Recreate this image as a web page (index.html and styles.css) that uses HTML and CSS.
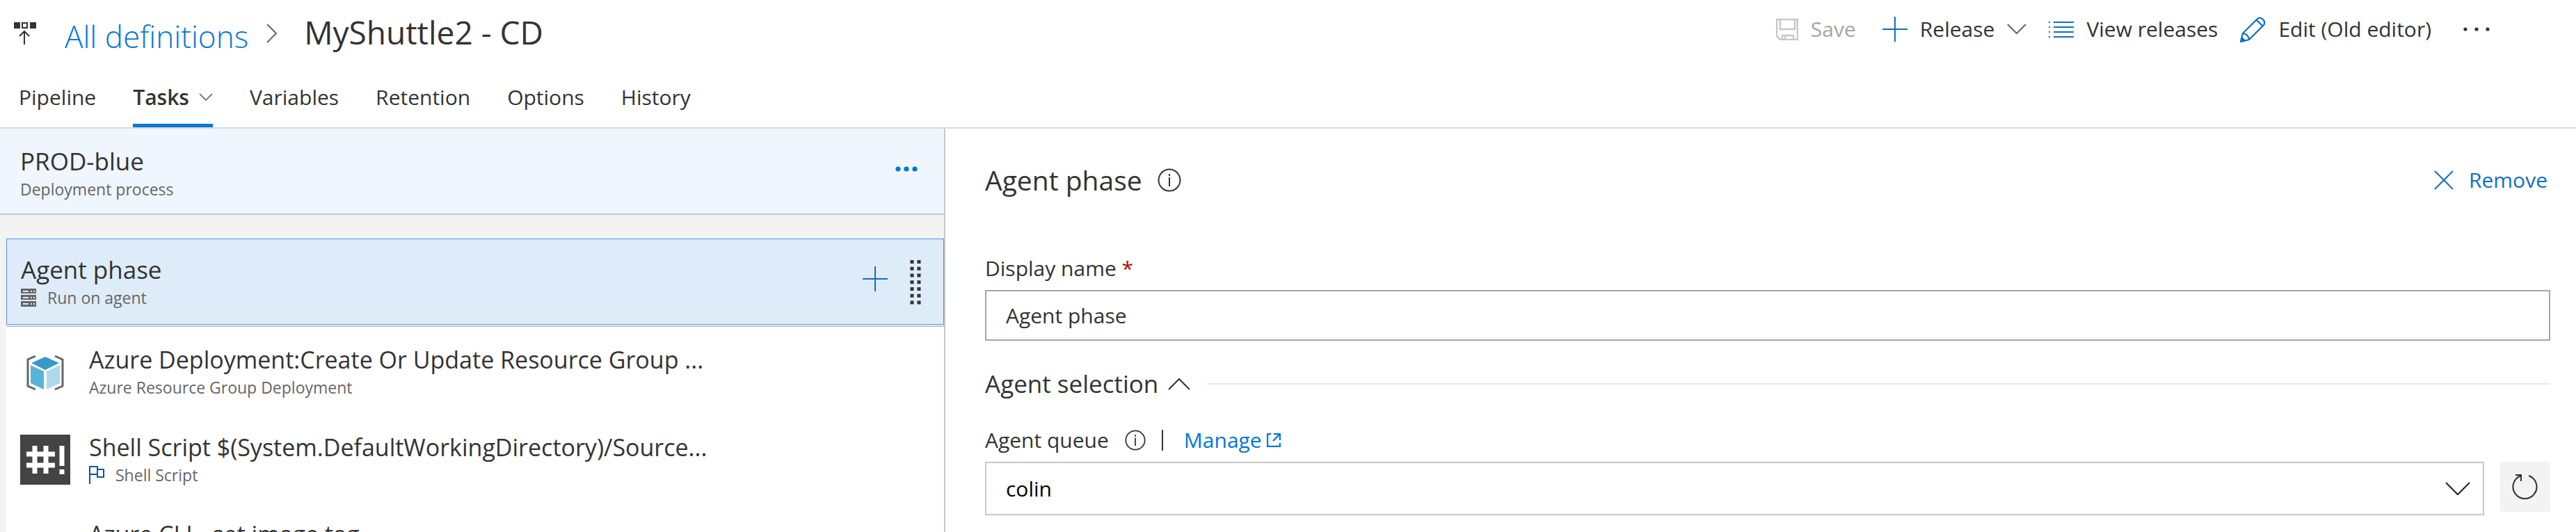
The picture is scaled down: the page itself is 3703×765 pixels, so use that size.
FILE: index.html
```
<!DOCTYPE html>
<html lang="en">
<head>
<meta charset="utf-8">
<title>MyShuttle2 - CD</title>
<link rel="stylesheet" href="styles.css">
</head>
<body>
<header class="header">
  <div class="title-row">
    <svg class="release-icon" width="32" height="34" viewBox="0 0 32 34" aria-hidden="true">
      <path d="M0 1h9v9H0zM23 1h9v9h-9z" fill="#333"/>
      <path d="M12 2h7v7h-7zM15 33V15M8 21l7-7 7 7" fill="none" stroke="#333" stroke-width="2"/>
    </svg>
    <a class="crumb" href="#">All definitions</a>
    <svg class="crumb-sep" width="16" height="28" viewBox="0 0 16 28" aria-hidden="true"><path d="M1 1l13 13L1 27" fill="none" stroke="#666" stroke-width="2"/></svg>
    <h1 class="title">MyShuttle2 - CD</h1>
    <div class="toolbar">
      <button class="tool tool-save" disabled>
        <svg width="32" height="32" viewBox="0 0 32 32" aria-hidden="true"><path d="M1 2h30v29H6l-5-5zM6 2v14h21V2M9 31v-6h16v6M13 31v-5" fill="none" stroke="#c8c8c8" stroke-width="2.6"/></svg>
        Save</button>
      <button class="tool">
        <svg width="36" height="36" viewBox="0 0 36 36" aria-hidden="true"><path d="M18 0v36M0 18h36" stroke="#106ebe" stroke-width="2"/></svg>
        Release
        <svg width="28" height="16" viewBox="0 0 28 16" aria-hidden="true"><path d="M1 1l13 13L27 1" fill="none" stroke="#666" stroke-width="2"/></svg></button>
      <button class="tool">
        <svg width="36" height="24" viewBox="0 0 36 24" aria-hidden="true"><path d="M0 2h2M7 2h29M0 9h2M7 9h29M0 16h2M7 16h29M0 23h2M7 23h29" stroke="#106ebe" stroke-width="2"/></svg>
        View releases</button>
      <button class="tool">
        <svg width="37" height="37" viewBox="0 0 37 37" aria-hidden="true"><path d="M1 36l3-12L25 3q4-3 8 1t1 8L13 33zM24 5l9 9M4 24q8 1 9 9" fill="none" stroke="#106ebe" stroke-width="2.2"/><path d="M1 36l2-7 5 5z" fill="#106ebe"/></svg>
        Edit (Old editor)</button>
      <button class="more" aria-label="More actions">
        <svg width="38" height="6" viewBox="0 0 38 6" aria-hidden="true"><g fill="#333"><circle cx="3" cy="3" r="2.6"/><circle cx="19" cy="3" r="2.6"/><circle cx="35" cy="3" r="2.6"/></g></svg>
      </button>
    </div>
  </div>
  <nav class="tabs">
    <a class="tab" href="#">Pipeline</a>
    <a class="tab tab-active" href="#" aria-current="page">Tasks
      <svg width="20" height="12" viewBox="0 0 20 12" aria-hidden="true"><path d="M1 1l9 9 9-9" fill="none" stroke="#555" stroke-width="1.5"/></svg></a>
    <a class="tab" href="#">Variables</a>
    <a class="tab" href="#">Retention</a>
    <a class="tab" href="#">Options</a>
    <a class="tab" href="#">History</a>
  </nav>
</header>
<main class="body">
  <section class="process">
    <div class="process-head">
      <div class="row-text">
        <h2 class="row-title row-title-main">PROD-blue</h2>
        <p class="row-sub">Deployment process</p>
      </div>
      <button class="process-more" aria-label="More">
        <svg width="32" height="8" viewBox="0 0 32 8" aria-hidden="true"><g fill="#0078d7"><circle cx="4" cy="4" r="3.6"/><circle cx="16" cy="4" r="3.6"/><circle cx="28" cy="4" r="3.6"/></g></svg>
      </button>
    </div>
    <div class="list">
      <div class="phase">
        <div class="row-text">
          <h2 class="row-title row-title-main">Agent phase</h2>
          <p class="row-sub">
            <svg width="22" height="26" viewBox="0 0 22 26" aria-hidden="true"><path d="M0 0h22v7H0zM0 9h22v7H0zM0 18h22v8H0z" fill="#666"/><path d="M3 3h8v2H3zM14 3h2v2h-2zM18 3h2v2h-2zM3 12h8v2H3zM14 12h2v2h-2zM18 12h2v2h-2zM3 21h8v2H3zM14 21h2v2h-2zM18 21h2v2h-2z" fill="#deecf9"/></svg>
            Run on agent</p>
        </div>
        <button class="add" aria-label="Add task">
          <svg width="36" height="36" viewBox="0 0 36 36" aria-hidden="true"><path d="M18 0v36M0 18h36" stroke="#106ebe" stroke-width="2"/></svg>
        </button>
        <svg width="16" height="64" viewBox="0 0 16 64" aria-hidden="true"><path d="M3 0v64M13 0v64" stroke="#333" stroke-width="5" stroke-dasharray="5 4.75"/></svg>
      </div>
      <div class="tasks">
        <div class="task">
          <svg width="72" height="72" viewBox="0 0 72 72" aria-hidden="true">
            <path d="M22 13l-11 5v38l11 5M50 13l11 5v38l-11 5" fill="none" stroke="#666" stroke-width="3"/>
            <path d="M36 14l20 9-20 10-20-10z" fill="#3999c6"/>
            <path d="M15 26l19 9v26L15 52z" fill="#59b4d9"/>
            <path d="M57 26l-19 9v26l19-9z" fill="#acdaec"/>
          </svg>
          <div class="row-text">
            <h3 class="row-title">Azure Deployment:Create Or Update Resource Group ...</h3>
            <p class="row-sub">Azure Resource Group Deployment</p>
          </div>
        </div>
        <div class="task">
          <svg width="72" height="72" viewBox="0 0 72 72" aria-hidden="true">
            <path d="M0 0h72v72H0z" fill="#444"/>
            <path d="M21 16v40M37 16v40M9 28h41M9 44h41M60 16v29M60 50v7" stroke="#fff" stroke-width="7"/>
          </svg>
          <div class="row-text">
            <h3 class="row-title">Shell Script $(System.DefaultWorkingDirectory)/Source...</h3>
            <p class="row-sub">
              <svg width="22" height="26" viewBox="0 0 22 26" aria-hidden="true"><path d="M1 26V1h11v11H1M12 5h9v11h-9v-4" fill="none" stroke="#005a9e" stroke-width="2"/></svg>
              Shell Script</p>
          </div>
        </div>
        <div class="task">
          <svg width="72" height="72" viewBox="0 0 72 72" aria-hidden="true"><path d="M18 64a14 14 0 0 1 4-27 19 19 0 0 1 37 0 14 14 0 0 1-3 27z" fill="#59d0f2"/></svg>
          <div class="row-text">
            <h3 class="row-title">Azure CLI - set image tag</h3>
          </div>
        </div>
      </div>
    </div>
  </section>
  <section class="details">
    <div class="details-head">
      <h2 class="details-title">Agent phase</h2>
      <svg width="34" height="34" viewBox="0 0 34 34" role="img" aria-label="Info"><circle cx="17" cy="17" r="15.5" fill="none" stroke="#333" stroke-width="2"/><path d="M17 13v13M17 8v3" stroke="#333" stroke-width="2"/></svg>
      <button class="remove">
        <svg width="28" height="28" viewBox="0 0 28 28" aria-hidden="true"><path d="M1 1l26 26M27 1L1 27" stroke="#106ebe" stroke-width="2"/></svg>
        Remove</button>
    </div>
    <label class="label" for="name">Display name <span class="required">*</span></label>
    <input class="text" id="name" type="text" value="Agent phase">
    <div class="group">
      <button class="group-toggle">Agent selection
        <svg width="32" height="18" viewBox="0 0 32 18" aria-hidden="true"><path d="M1 17L16 2l15 15" fill="none" stroke="#333" stroke-width="2"/></svg></button>
      <span class="rule"></span>
    </div>
    <div class="queue-label">
      <label for="queue">Agent queue</label>
      <svg class="queue-info" width="30" height="30" viewBox="0 0 34 34" role="img" aria-label="Info"><circle cx="17" cy="17" r="15.5" fill="none" stroke="#333" stroke-width="2"/><path d="M17 13v13M17 8v3" stroke="#333" stroke-width="2"/></svg>
      <span class="bar"></span>
      <a class="manage" href="#">Manage
        <svg width="20" height="20" viewBox="0 0 20 20" aria-hidden="true"><path d="M6 1H1v18h18v-5M9 11l9-9M10 1h9v9" fill="none" stroke="#0078d7" stroke-width="2.4"/></svg></a>
    </div>
    <div class="queue-row">
      <div class="select-wrap">
        <select class="select" id="queue"><option>colin</option></select>
        <svg class="select-caret" width="36" height="20" viewBox="0 0 36 20" aria-hidden="true"><path d="M1 1l17 17L35 1" fill="none" stroke="#222" stroke-width="2"/></svg>
      </div>
      <button class="refresh" aria-label="Refresh">
        <svg width="40" height="40" viewBox="0 0 40 40" aria-hidden="true"><path d="M25 4a17 17 0 1 1-11 0M6 3h8v9" fill="none" stroke="#333" stroke-width="2"/></svg>
      </button>
    </div>
  </section>
</main>
</body>
</html>
```
FILE: styles.css
```
* { box-sizing: border-box; }
body {
  margin: 0;
  height: 100vh;
  overflow: hidden;
  display: flex;
  flex-direction: column;
  background: #fff;
  color: #333;
  font-family: "Open Sans", "Noto Sans", sans-serif;
  font-size: 30px;
  line-height: 40px;
}
h1, h2, h3, p { margin: 0; font-weight: 400; }
a { color: #0078d7; text-decoration: none; }
button {
  display: flex;
  align-items: center;
  padding: 0;
  border: 0;
  background: none;
  color: inherit;
  font: inherit;
}
svg { flex: none; display: block; }

.header { border-bottom: 2px solid #dadada; }
.title-row { display: flex; align-items: center; height: 96px; padding: 0 124px 0 20px; }
.release-icon { margin-right: 41px; }
.crumb { font-size: 44px; font-weight: 300; line-height: 60px; padding-top: 8px; }
.crumb-sep { margin: 0 38px 0 26px; }
.title { font-size: 46px; line-height: 60px; padding-bottom: 4px; }
.toolbar { display: flex; align-items: center; margin-left: auto; padding-bottom: 12px; }
.tool { gap: 18px; margin-right: 32px; white-space: nowrap; }
.tool-save { color: #a6a6a6; margin-right: 38px; }
.more { margin-left: 14px; }

.tabs { display: flex; gap: 53px; padding-left: 27px; height: 87px; }
.tab { display: flex; align-items: center; gap: 14px; color: #333; padding-top: 5px; border-bottom: 5px solid transparent; }
.tab-active { font-weight: 600; border-bottom-color: #0078d7; }

.body { flex: 1; min-height: 0; display: flex; }
.process { width: 1359px; flex: none; background: #f3f3f3; border-right: 2px solid #c8c8c8; }
.process-head { display: flex; align-items: center; justify-content: space-between; height: 124px; padding: 8px 38px 0 29px; background: #eff6fd; border-bottom: 2px solid #c8c8c8; }
.row-title { font-size: 34px; line-height: 44px; white-space: nowrap; }
.row-title-main { font-size: 35px; }
.row-sub { display: flex; align-items: center; gap: 16px; font-size: 23px; line-height: 36px; color: #666; }
.process-more { padding-bottom: 15px; }
.list { margin: 34px 0 0 9px; background: #fff; }
.phase { display: flex; align-items: center; height: 124px; padding: 2px 32px 0 20px; background: #deecf9; border: 1px solid #4f92f5; }
.add { margin: 0 32px 0 auto; padding-bottom: 10px; }
.tasks { margin-top: 1px; border-top: 2px solid #c8c8c8; }
.task { display: flex; align-items: center; gap: 27px; height: 126px; padding: 4px 0 0 20px; }
.task:last-child { align-items: flex-start; padding-top: 24px; }

.details { flex: 1; min-width: 0; padding: 46px 37px 0 57px; }
.details-head { display: flex; align-items: center; gap: 22px; height: 56px; }
.details-title { font-size: 39px; line-height: 56px; }
.remove { gap: 22px; margin: 0 4px 0 auto; color: #106ebe; }
.label { display: block; margin-top: 79px; }
.required { color: #b00; }
.text, .select { display: block; width: 100%; margin: 0; padding: 0 28px; border: 2px solid #a6a6a6; border-radius: 0; background: #fff; color: #333; font: inherit; outline: 0; }
.text { height: 73px; margin-top: 11px; }
.group { display: flex; align-items: center; gap: 24px; margin-top: 38px; }
.group-toggle { gap: 14px; font-size: 35px; line-height: 48px; }
.rule { flex: 1; height: 2px; background: #e8e8e8; }
.queue-label { display: flex; align-items: center; margin-top: 37px; }
.queue-info { margin: 0 23px; }
.bar { width: 2px; height: 30px; background: #333; }
.manage { display: flex; align-items: center; gap: 7px; margin-left: 30px; }
.queue-row { display: flex; gap: 23px; margin-top: 11px; }
.select-wrap { flex: 1; position: relative; }
.select { height: 77px; border-color: #c8c8c8; color: #000; appearance: none; }
.select-caret { position: absolute; right: 20px; top: 29px; pointer-events: none; }
.refresh { width: 72px; height: 72px; justify-content: center; background: #f3f3f3; }
```
